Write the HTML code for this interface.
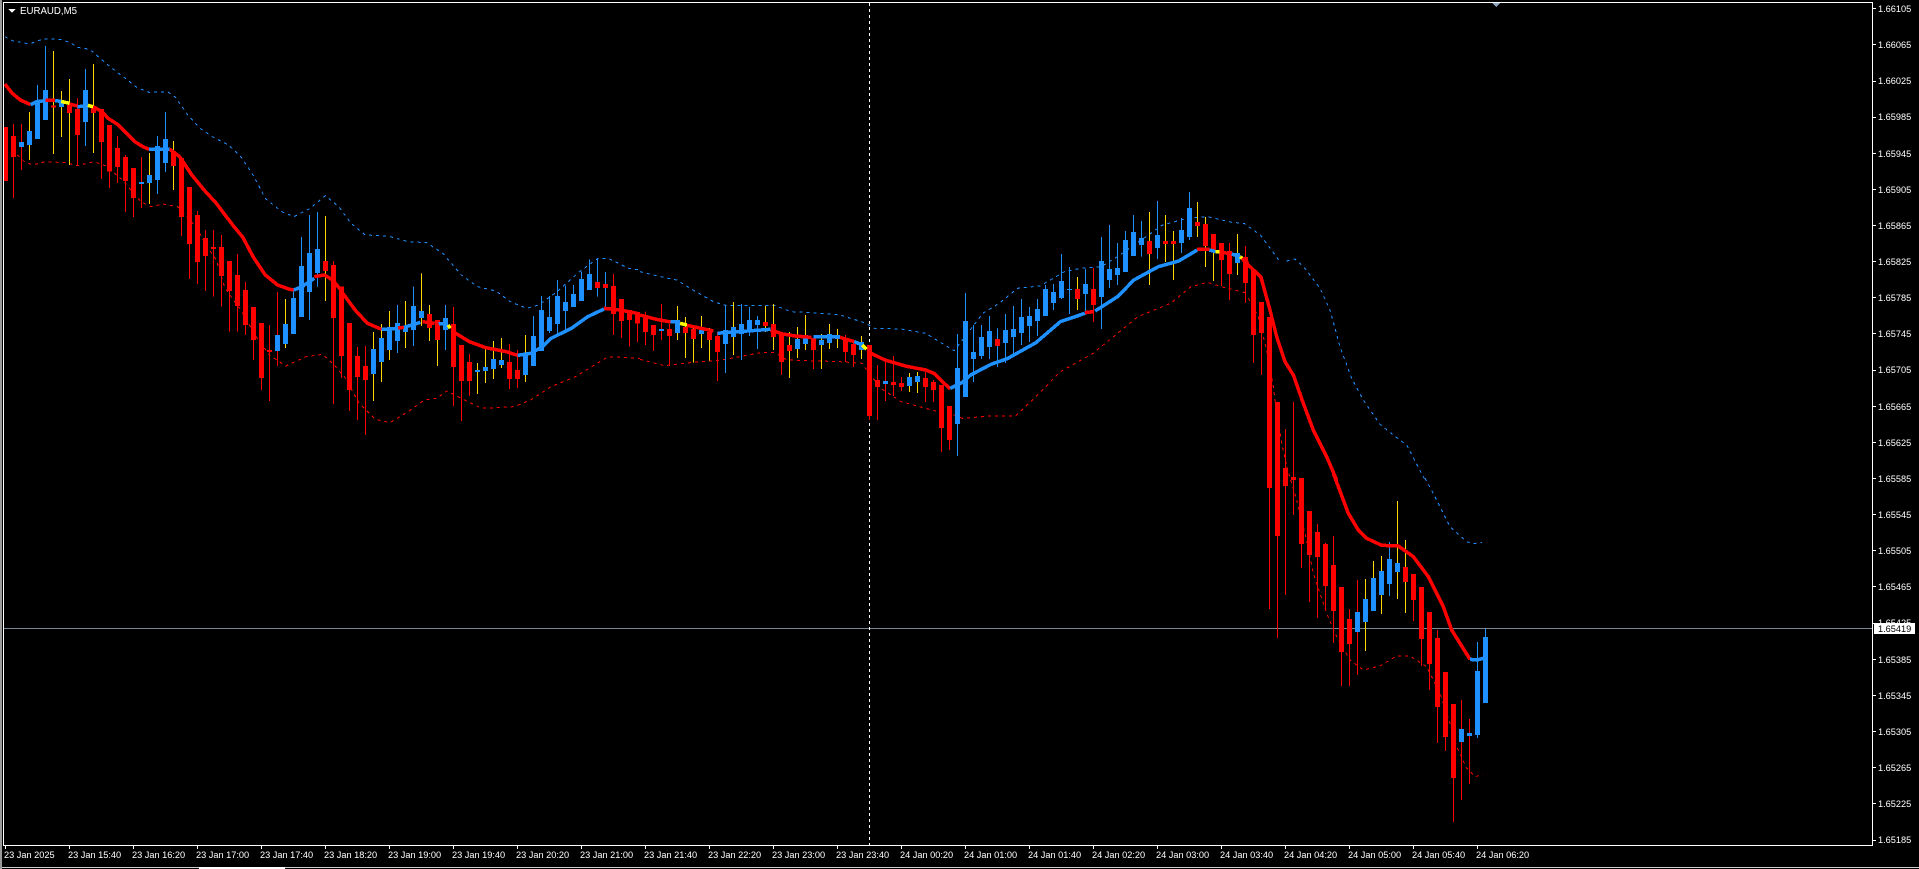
<!DOCTYPE html>
<html><head><meta charset="utf-8"><title>EURAUD,M5</title>
<style>html,body{margin:0;padding:0;background:#000;overflow:hidden}svg{display:block}text{font-family:"Liberation Sans",sans-serif;font-size:9.2px;fill:#fff}
.ns *{vector-effect:non-scaling-stroke;fill:none;stroke-linejoin:miter}
.th{stroke-width:3.5}.da{stroke-width:1;stroke-dasharray:3 4}
.r{stroke:#f00}.b{stroke:#1e90ff}.y{stroke:#ff0}.g{stroke:#ffd700}
.w{fill:none;stroke-width:1}.bd{fill:none;stroke-width:5}</style></head>
<body>
<svg width="1919" height="869" viewBox="0 0 1919 869" xmlns="http://www.w3.org/2000/svg" shape-rendering="crispEdges">
<rect width="1919" height="869" fill="#000"/>
<rect x="0" y="0" width="2" height="869" fill="#9a9a9a"/>

<!-- crosshair -->
<rect x="4" y="628" width="1868" height="1" fill="#778899"/>
<path d="M869.5 3V845" stroke="#fff" stroke-width="1" stroke-dasharray="3 3" fill="none"/>

<!-- dashed bands -->
<g class="ns" transform="scale(.40816,.33333)">
<path class="da b" d="M12 110L30 122 72 132 105 117 150 118 175 130 190 142 220 148 250 180 280 210 310 238 335 262 365 277 410 275 430 292 460 345 490 385 520 410 560 435 590 470 620 525 650 595 690 635 720 650 760 625 797 587 830 620 860 670 895 705 950 708 1000 725 1045 728 1085 760 1130 825 1170 860 1215 873 1250 905 1290 925 1320 915 1365 875 1420 815 1465 775 1490 775 1540 805 1568 810"/>
<path class="da r" d="M30 450L60 485 80 495 110 485 160 488 190 497 230 485 260 498 300 540 345 605 370 620 400 612 435 620 480 680 510 745 530 780 550 860 560 880 590 930 630 1015 660 1065 700 1098 750 1070 790 1063 815 1090 845 1132 880 1210 920 1258 955 1268 1000 1235 1040 1200 1070 1195 1095 1173 1130 1195 1180 1225 1260 1220 1300 1200 1350 1160 1410 1130 1490 1070 1568 1075"/>
</g>
<g class="ns" transform="translate(640,200) scale(.40816,.33333)">
<path class="da b" d="M0 215L50 230 90 240 130 270 180 305 210 316 330 316 370 335 420 338 490 345 550 368 575 385 640 387 700 400 740 430 770 452 790 420 840 340 880 310 925 265 980 258 1040 215 1080 205 1130 200 1170 170 1240 110 1280 75 1340 55 1390 50 1450 67 1480 70 1520 105 1568 185"/>
<path class="da r" d="M0 478L60 497 130 487 200 480 300 457 330 458 360 480 490 485 545 490 555 510 590 565 640 605 700 625 730 635 760 640 790 655 860 648 920 648 970 590 1030 515 1110 460 1180 390 1220 350 1300 310 1350 260 1390 247 1430 262 1490 280"/>
</g>
<g class="ns" transform="translate(1180,180) scale(.33333)">
<path class="da b" d="M320 243L345 237 375 265 420 325 450 390 480 500 515 595 550 660 600 733 640 765 680 795 735 900"/>
<path class="da r" d="M205 355L235 410 260 510 280 620 285 660 305 790 325 880"/>
</g>
<g class="ns" transform="translate(1200,440) scale(.33333)">
<path class="da b" d="M675 115L700 160 750 260 800 305 820 311 846 307"/>
<path class="da r" d="M260 80L290 180 320 300 340 400 380 520 410 590 450 660 490 690 540 678 590 648 630 648 680 680 720 760 750 850 770 920 800 985 825 1010 848 1003"/>
</g>

<!-- candles part 1 -->
<g transform="scale(1,.33333)">
<path class="w g" d="M29.5 336V480M53.5 153V462M61.5 273V411M69.5 237V495M93.5 192V459M149.5 459V612M173.5 423V570M285.5 897V1044M325.5 648V903M373.5 996V1203M381.5 972V1146M389.5 933V1080M405.5 903V1044M421.5 820V978M429.5 915V1023M437.5 960V1098M477.5 1089V1182M485.5 1041V1149M493.5 1023V1137M501.5 1014V1104M525.5 1005V1146"/>
<path class="w r" d="M13.5 372V594M21.5 372V510M77.5 295V498M101.5 327V537M109.5 375V564M117.5 408V549M125.5 465V636M133.5 504V651M141.5 471V624M181.5 474V708M189.5 561V837M197.5 633V852M205.5 690V873M213.5 690V890M221.5 705V920M229.5 783V995M237.5 762V995M245.5 846V1005M253.5 921V1080M261.5 969V1170M269.5 975V1203M277.5 876V1098M333.5 783V1212M341.5 860V1134M349.5 969V1233M357.5 1041V1260M365.5 1038V1305M453.5 921V1218M461.5 1035V1263M469.5 1062V1188M509.5 1032V1167M517.5 1050V1164M613.5 822V1005M621.5 897V1014M629.5 930V1040M637.5 942V1026"/>
<path class="w b" d="M37.5 255V417M45.5 138V360M85.5 207V438M157.5 408V582M165.5 336V516M293.5 865V1002M301.5 711V951M309.5 645V960M317.5 636V860M397.5 915V1059M413.5 860V1038M445.5 915V1050M533.5 948V1098M541.5 888V1053M549.5 888V999M557.5 840V1002M565.5 857V990M573.5 855V921M581.5 815V903M589.5 778V870M597.5 775V890M605.5 816V924"/>
<path class="bd r" d="M5.5 381V543M13.5 408V471M53.5 316V323M69.5 315V339M77.5 327V405M93.5 318V339M101.5 327V426M109.5 375V514M117.5 444V501M125.5 471V543M133.5 504V594M173.5 453V498M181.5 474V651M189.5 561V732M197.5 645V786M205.5 714V768M213.5 741V747M221.5 741V828M229.5 783V873M237.5 825V918M245.5 870V975M253.5 921V1020M261.5 969V1134M269.5 1050V1056M325.5 783V813M333.5 795V954M341.5 860V1068M349.5 969V1170M357.5 1068V1131M365.5 1098V1140M429.5 942V984M437.5 960V1020M453.5 972V1101M461.5 1035V1143M469.5 1086V1143M509.5 1086V1137M517.5 1110V1137M597.5 846V864M605.5 852V864M613.5 858V942M621.5 897V963M629.5 930V960M637.5 942V970"/>
<path class="bd b" d="M21.5 426V441M29.5 393V435M37.5 303V417M45.5 270V360M61.5 309V321M85.5 270V366M141.5 546V552M149.5 525V549M157.5 438V540M165.5 417V489M277.5 1005V1053M285.5 972V1032M293.5 894V1002M301.5 798V951M309.5 759V876M317.5 747V819M373.5 1047V1122M381.5 1014V1086M389.5 984V1050M397.5 969V1023M405.5 978V996M413.5 918V990M421.5 933V954M445.5 954V990M477.5 1110V1116M485.5 1101V1113M493.5 1077V1107M501.5 1080V1095M525.5 1065V1125M533.5 1008V1098M541.5 930V1053M549.5 951V993M557.5 888V972M565.5 906V933M573.5 882V921M581.5 837V903M589.5 822V870"/>
</g>

<!-- candles part 2 -->
<g transform="translate(0,200) scale(1,.33333)">
<path class="w g" d="M677.5 318V420M685.5 351V474M693.5 381V488M701.5 348V444M709.5 384V482M733.5 306V465M765.5 318V396M773.5 312V450M789.5 396V534M797.5 381V474M805.5 345V450M821.5 402V507M829.5 372V447M837.5 387V444M861.5 408V477M909.5 519V576M917.5 516V579M1077.5 231V330M1149.5 36V255M1165.5 45V186M1173.5 93V240"/>
<path class="w r" d="M645.5 335V435M653.5 375V453M661.5 312V420M669.5 372V498M717.5 396V543M781.5 399V525M813.5 414V507M845.5 405V486M853.5 420V501M869.5 435V660M877.5 495V660M885.5 480V603M893.5 468V588M901.5 531V573M925.5 516V606M933.5 540V606M941.5 555V756M949.5 618V750M1093.5 204V366"/>
<path class="w b" d="M725.5 315V519M741.5 312V480M749.5 321V408M757.5 348V447M957.5 402V768M965.5 279V591M973.5 375V546M981.5 375V477M989.5 348V477M997.5 385V501M1005.5 342V489M1013.5 318V470M1021.5 297V435M1029.5 321V426M1037.5 297V408M1045.5 255V348M1053.5 252V330M1061.5 162V297M1069.5 201V342M1085.5 207V345M1101.5 111V387M1109.5 75V264M1117.5 129V255M1125.5 93V216M1133.5 45V168M1141.5 63V170M1157.5 3V177M1181.5 54V159M1189.5 -24V120"/>
<path class="bd r" d="M645.5 354V396M653.5 375V405M669.5 387V408M685.5 381V399M693.5 387V417M709.5 396V420M717.5 408V456M765.5 366V378M773.5 372V411M781.5 399V486M789.5 435V453M813.5 414V450M845.5 417V456M853.5 432V465M869.5 435V648M877.5 540V561M893.5 546V555M901.5 549V561M925.5 534V561M933.5 546V570M941.5 555V684M949.5 618V720M997.5 417V438M1077.5 267V297M1093.5 267V315M1149.5 123V162M1165.5 123V132M1173.5 123V132"/>
<path class="bd b" d="M661.5 387V393M677.5 363V399M701.5 390V402M725.5 390V432M733.5 381V411M741.5 372V402M749.5 360V396M757.5 360V375M797.5 417V447M805.5 405V432M821.5 420V435M829.5 402V429M837.5 405V417M861.5 426V450M885.5 543V552M909.5 531V558M917.5 528V546M957.5 504V672M965.5 363V591M973.5 456V477M981.5 411V468M989.5 393V441M1005.5 390V429M1013.5 387V411M1021.5 351V399M1029.5 348V378M1037.5 327V363M1045.5 267V348M1053.5 276V309M1061.5 243V294M1069.5 267V270M1085.5 252V282M1101.5 183V291M1109.5 207V240M1117.5 204V225M1125.5 120V216M1133.5 96V168M1141.5 114V135M1157.5 105V144M1181.5 90V129M1189.5 24V111"/>
</g>

<!-- candles part 3 -->
<g transform="translate(0,180) scale(1,.33333)">
<path class="w g" d="M1197.5 66V171M1205.5 111V261M1213.5 162V303M1237.5 162V285"/>
<path class="w r" d="M1221.5 189V318M1229.5 189V360M1245.5 198V369M1253.5 270V549M1261.5 366V585M1269.5 411V1287M1277.5 666V1374"/>
<path class="bd r" d="M1197.5 126V138M1205.5 132V198M1213.5 162V216M1221.5 189V240M1229.5 213V282M1245.5 231V309M1253.5 270V465M1261.5 366V459M1269.5 411V924M1277.5 666V1068"/>
<path class="bd b" d="M1237.5 219V249"/>
</g>

<!-- candles part 4 -->
<g transform="translate(0,440) scale(1,.33333)">
<path class="w g" d="M1365.5 417V633M1373.5 363V513M1381.5 348V522M1397.5 183V477M1405.5 300V519"/>
<path class="w r" d="M1285.5 -33V465M1293.5 -114V225M1301.5 114V384M1309.5 213V486M1317.5 252V534M1325.5 309V510M1333.5 288V609M1341.5 441V738M1349.5 507V738M1357.5 420V705M1413.5 402V543M1421.5 441V678M1429.5 516V750M1437.5 570V909M1445.5 696V933M1453.5 792V1146M1461.5 780V1080M1469.5 837V1032"/>
<path class="w b" d="M1389.5 306V468M1477.5 606V894M1485.5 567V789"/>
<path class="bd r" d="M1285.5 84V138M1293.5 111V120M1301.5 114V312M1309.5 213V345M1317.5 276V351M1325.5 312V438M1333.5 375V513M1341.5 441V636M1349.5 537V612M1405.5 381V426M1413.5 402V480M1421.5 441V597M1429.5 516V672M1437.5 594V801M1445.5 696V891M1453.5 792V1014"/>
<path class="bd b" d="M1357.5 516V576M1365.5 477V546M1373.5 414V513M1381.5 393V465M1389.5 357V432M1397.5 369V396M1461.5 867V906M1469.5 879V888M1477.5 693V885M1485.5 591V789"/>
</g>

<!-- thick MA -->
<g class="ns" transform="scale(.40816,.33333)">
<path class="th r" d="M12 252L30 280 50 300 75 314M111 301H135M170 312L190 318M228 320L250 335 265 355 290 375 310 400 330 425 350 440 365 448M415 447L440 470 470 525 500 570 530 610 570 675 595 712 620 770 650 825 680 855 710 868 720 870M770 830L795 825 815 840 835 870 840 880 870 930 900 970 935 988M975 984L990 982M1035 965L1065 970M1110 995L1150 1025 1190 1043 1240 1055 1268 1066M1480 925L1520 930 1568 942"/>
<path class="th b" d="M75 314L90 305 111 302M135 302L150 304M190 320L215 318M365 448L415 447M720 870L740 860 770 835M935 988L975 985M990 982L1030 967M1075 972L1098 970M1268 1066L1300 1060 1330 1040 1350 1015 1400 985 1440 950 1480 927"/>
<path class="th y" d="M150 304L170 310M215 316L228 320M1098 975L1103 985"/>
</g>
<g class="ns" transform="translate(640,200) scale(.40816,.33333)">
<path class="th r" d="M0 345L40 358 75 366M115 376L180 393M320 390L350 402 380 408 420 412M490 412L525 425M558 455L600 480 650 498 700 510 720 520 760 567M1090 338L1110 335M1365 148H1395M1420 158L1450 160M1475 175L1490 190"/>
<path class="th b" d="M75 366H98M190 400L205 398 320 388M425 410H490M525 425L545 435M760 565L790 547 810 525 860 493 900 476 970 428 1030 365 1090 340M1115 333L1170 290 1210 240 1270 200 1320 183 1365 150M1395 150L1410 155M1450 162L1470 170"/>
<path class="th y" d="M98 370L115 375M545 435L555 448M1410 155H1420M1470 170L1475 175"/>
</g>
<g class="ns" transform="translate(1180,180) scale(.33333)">
<path class="th r" d="M190 240L243 292 270 390 290 470 315 545 340 585 370 670 400 750 440 830 470 900"/>
</g>
<g class="ns" transform="translate(1200,440) scale(.33333)">
<path class="th r" d="M400 100L445 220 475 270 500 295 545 316 595 318 640 350 685 410 730 500 755 570 810 658"/>
<path class="th b" d="M810 658L830 660 850 655"/>
</g>

<!-- frame -->
<rect x="3" y="2" width="1870" height="1" fill="#fff"/>
<rect x="3" y="2" width="1" height="844" fill="#fff"/>
<rect x="1872" y="2" width="1" height="844" fill="#fff"/>
<rect x="3" y="845" width="1870" height="1" fill="#fff"/>
<rect x="2" y="867" width="1917" height="1" fill="#d0d0d0"/>
<rect x="199" y="867" width="86" height="2" fill="#fff"/>

<!-- header -->
<path d="M8 9h7.5l-3.7 3.8z" fill="#fff"/>
<text x="20" y="14" style="font-size:9.7px">EURAUD,M5</text>
<path d="M1492 3h8l-4 4z" fill="#8fa6c4"/>

<!-- price ticks -->
<path d="M1873 8.5h3M1873 44.5h3M1873 81.5h3M1873 117.5h3M1873 153.5h3M1873 189.5h3M1873 225.5h3M1873 261.5h3M1873 297.5h3M1873 333.5h3M1873 370.5h3M1873 406.5h3M1873 442.5h3M1873 478.5h3M1873 514.5h3M1873 550.5h3M1873 586.5h3M1873 623.5h3M1873 659.5h3M1873 695.5h3M1873 731.5h3M1873 767.5h3M1873 803.5h3M1873 840.5h3" stroke="#fff" stroke-width="1" fill="none"/>
<g>
<text x="1878" y="12">1.66105</text>
<text x="1878" y="48">1.66065</text>
<text x="1878" y="84">1.66025</text>
<text x="1878" y="120">1.65985</text>
<text x="1878" y="157">1.65945</text>
<text x="1878" y="193">1.65905</text>
<text x="1878" y="229">1.65865</text>
<text x="1878" y="265">1.65825</text>
<text x="1878" y="301">1.65785</text>
<text x="1878" y="337">1.65745</text>
<text x="1878" y="373">1.65705</text>
<text x="1878" y="410">1.65665</text>
<text x="1878" y="446">1.65625</text>
<text x="1878" y="482">1.65585</text>
<text x="1878" y="518">1.65545</text>
<text x="1878" y="554">1.65505</text>
<text x="1878" y="590">1.65465</text>
<text x="1878" y="626">1.65425</text>
<text x="1878" y="663">1.65385</text>
<text x="1878" y="699">1.65345</text>
<text x="1878" y="735">1.65305</text>
<text x="1878" y="771">1.65265</text>
<text x="1878" y="807">1.65225</text>
<text x="1878" y="843">1.65185</text>
</g>
<rect x="1874" y="623" width="41" height="11" fill="#fff"/>
<text x="1878" y="632" style="fill:#000">1.65419</text>

<!-- time ticks -->
<path d="M5.5 846v3M69.5 846v3M133.5 846v3M197.5 846v3M261.5 846v3M325.5 846v3M389.5 846v3M453.5 846v3M517.5 846v3M581.5 846v3M645.5 846v3M709.5 846v3M773.5 846v3M837.5 846v3M901.5 846v3M965.5 846v3M1029.5 846v3M1093.5 846v3M1157.5 846v3M1221.5 846v3M1285.5 846v3M1349.5 846v3M1413.5 846v3M1477.5 846v3" stroke="#fff" stroke-width="1" fill="none"/>
<g>
<text x="4" y="858">23 Jan 2025</text>
<text x="68" y="858">23 Jan 15:40</text>
<text x="132" y="858">23 Jan 16:20</text>
<text x="196" y="858">23 Jan 17:00</text>
<text x="260" y="858">23 Jan 17:40</text>
<text x="324" y="858">23 Jan 18:20</text>
<text x="388" y="858">23 Jan 19:00</text>
<text x="452" y="858">23 Jan 19:40</text>
<text x="516" y="858">23 Jan 20:20</text>
<text x="580" y="858">23 Jan 21:00</text>
<text x="644" y="858">23 Jan 21:40</text>
<text x="708" y="858">23 Jan 22:20</text>
<text x="772" y="858">23 Jan 23:00</text>
<text x="836" y="858">23 Jan 23:40</text>
<text x="900" y="858">24 Jan 00:20</text>
<text x="964" y="858">24 Jan 01:00</text>
<text x="1028" y="858">24 Jan 01:40</text>
<text x="1092" y="858">24 Jan 02:20</text>
<text x="1156" y="858">24 Jan 03:00</text>
<text x="1220" y="858">24 Jan 03:40</text>
<text x="1284" y="858">24 Jan 04:20</text>
<text x="1348" y="858">24 Jan 05:00</text>
<text x="1412" y="858">24 Jan 05:40</text>
<text x="1476" y="858">24 Jan 06:20</text>
</g>
</svg>
</body></html>
